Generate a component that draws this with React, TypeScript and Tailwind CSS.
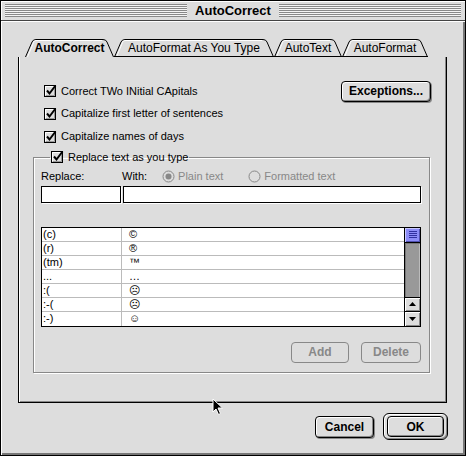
import React from "react";

function CheckBox() {
  return (
    <svg width="15" height="14" viewBox="0 0 15 14" className="shrink-0">
      <rect x="0.5" y="1.5" width="11" height="11" fill="#dddddd" stroke="#000" />
      <path d="M1.5 11 V2.5 H10.5" stroke="#fff" fill="none" />
      <path d="M2 11.5 H10.5 V3" stroke="#999" fill="none" />
      <path d="M3 6.5 L5.5 9.5 L11.5 1.5" stroke="#000" strokeWidth="2" fill="none" />
    </svg>
  );
}

function Radio({ on }: { on?: boolean }) {
  return (
    <svg width="13" height="13" viewBox="0 0 13 13" className="shrink-0">
      <circle cx="6.5" cy="6.5" r="5.5" fill="#dddddd" stroke="#888" />
      {on && <circle cx="6.5" cy="6.5" r="3" fill="#888" />}
    </svg>
  );
}

function Tab({ label, active, w }: { label: string; active?: boolean; w: number }) {
  const s = 7;
  return (
    <div className="relative h-[18px] flex items-center justify-center shrink-0" style={{ width: w }}>
      <svg className="absolute inset-0" width={w} height="18" viewBox={`0 0 ${w} 18`}>
        <path
          d={`M0.5 18 L${s} 3 Q${s + 1} 0.5 ${s + 4} 0.5 L${w - s - 4} 0.5 Q${w - s - 1} 0.5 ${w - s} 3 L${w - 0.5} 18`}
          fill="#dddddd"
          stroke="#000"
        />
        <path d={`M2.5 18 L${s + 1.5} 3.5 Q${s + 2} 1.5 ${s + 4} 1.5 L${w - s - 5} 1.5`} stroke="#fff" fill="none" />
        {!active && <path d={`M0 17.5 H${w}`} stroke="#000" />}
      </svg>
      <span className={`relative text-[12px] leading-none ${active ? "font-bold" : ""}`}>{label}</span>
    </div>
  );
}

const rows: [string, string][] = [
  ["(c)", "©"],
  ["(r)", "®"],
  ["(tm)", "™"],
  ["...", "…"],
  [":(", "☹"],
  [":-(", "☹"],
  [":-)", "☺"],
];

export default function App() {
  return (
    <div className="relative w-[466px] h-[456px] bg-[#dddddd] border border-black flex flex-col text-black font-['Liberation_Sans',Arial,sans-serif] select-none">
      {/* title bar */}
      <div className="h-[20px] flex items-center px-[4px] border-b border-[#444] shadow-[inset_1px_1px_0_#fff]">
        <div className="flex-1 h-[13px] bg-[repeating-linear-gradient(to_bottom,#888_0_1px,#f4f4f4_1px_2px)]" />
        <div className="px-[8px] text-[13px] font-bold leading-none">AutoCorrect</div>
        <div className="flex-1 h-[13px] bg-[repeating-linear-gradient(to_bottom,#888_0_1px,#f4f4f4_1px_2px)]" />
      </div>

      <div className="flex-1 flex flex-col pl-[17px] shadow-[inset_1px_1px_0_#fff,inset_-2px_-2px_0_#777]">
        {/* tabs */}
        <div className="mt-[18px] ml-[7px] flex">
          <Tab label="AutoCorrect" active w={89} />
          <Tab label="AutoFormat As You Type" w={160} />
          <Tab label="AutoText" w={68} />
          <Tab label="AutoFormat" w={86} />
        </div>

        {/* panel */}
        <div className="w-[429px] h-[346px] border border-black border-t-0 shadow-[inset_1px_0_0_#fff,inset_-1px_-1px_0_#888] flex flex-col">
          <div className="flex flex-col pl-[25px] pr-[15px] pt-[23px] text-[11px]">
            <div className="h-[22px] flex items-center">
              <CheckBox />
              <span className="ml-[2px]">Correct TWo INitial CApitals</span>
              <button className="ml-auto w-[90px] h-[21px] rounded-[4px] border border-black bg-[#dddddd] shadow-[inset_1px_1px_0_#fff,inset_-1px_-1px_0_#888,1px_1px_0_#888] text-[12px] font-bold">
                Exceptions...
              </button>
            </div>
            <div className="h-[23px] flex items-center">
              <CheckBox />
              <span className="ml-[2px]">Capitalize first letter of sentences</span>
            </div>
            <div className="h-[23px] flex items-center">
              <CheckBox />
              <span className="ml-[2px]">Capitalize names of days</span>
            </div>
          </div>

          <fieldset className="ml-[14px] mt-[1px] w-[397px] border border-[#888] shadow-[1px_1px_0_#fff,inset_1px_1px_0_#fff] pl-[7px] pr-[8px] pb-[9px] text-[11px]">
            <legend className="ml-[9px] px-[1px] flex items-center">
              <CheckBox />
              <span className="ml-[2px]">Replace text as you type</span>
            </legend>
            <div className="mt-[4px] h-[14px] flex items-center">
              <span className="w-[81px]">Replace:</span>
              <span>With:</span>
              <span className="ml-[15px] flex items-center text-[#888]">
                <Radio on />
                <span className="ml-[3px]">Plain text</span>
              </span>
              <span className="ml-[25px] flex items-center text-[#888]">
                <Radio />
                <span className="ml-[3px]">Formatted text</span>
              </span>
            </div>
            <div className="mt-[2px] flex">
              <div className="w-[80px] h-[17px] bg-white border border-black shadow-[1px_1px_0_#fff]" />
              <div className="ml-[2px] w-[298px] h-[17px] bg-white border border-black shadow-[1px_1px_0_#fff]" />
            </div>

            <div className="mt-[24px] w-[380px] h-[100px] border border-black bg-white flex">
              <div className="flex-1 flex flex-col">
                {rows.map(([a, b], i) => (
                  <div key={i} className={`h-[14px] flex text-[11px] leading-[13px] ${i < rows.length - 1 ? "border-b border-[#bbb]" : ""}`}>
                    <div className="w-[80px] pl-[1px] border-r border-[#bbb]">{a}</div>
                    <div className="pl-[7px]">{b}</div>
                  </div>
                ))}
              </div>
              <div className="w-[16px] border-l border-black flex flex-col bg-[#999]">
                <div className="h-[15px] bg-[#8c8cf7] border-b border-black shadow-[inset_1px_1px_0_#c8c8ff,inset_-1px_-1px_0_#5050b0] flex flex-col items-center justify-center gap-[1px]">
                  <div className="w-[8px] h-px bg-[#3030a0]" />
                  <div className="w-[8px] h-px bg-[#3030a0]" />
                  <div className="w-[8px] h-px bg-[#3030a0]" />
                  <div className="w-[8px] h-px bg-[#3030a0]" />
                </div>
                <div className="flex-1 shadow-[inset_1px_1px_0_#777,inset_-1px_0_0_#bbb]" />
                <div className="h-[14px] border-t border-black bg-[#dddddd] shadow-[inset_1px_1px_0_#fff,inset_-1px_-1px_0_#888] flex items-center justify-center">
                  <svg width="7" height="4" viewBox="0 0 7 4"><path d="M3.5 0 L7 4 H0 Z" fill="#000" /></svg>
                </div>
                <div className="h-[15px] border-t border-black bg-[#dddddd] shadow-[inset_1px_1px_0_#fff,inset_-1px_-1px_0_#888] flex items-center justify-center">
                  <svg width="7" height="4" viewBox="0 0 7 4"><path d="M0 0 H7 L3.5 4 Z" fill="#000" /></svg>
                </div>
              </div>
            </div>

            <div className="mt-[15px] flex justify-end gap-[12px]">
              <button className="w-[58px] h-[21px] rounded-[4px] border border-[#888] text-[#888] text-[12px] font-bold">Add</button>
              <button className="w-[60px] h-[21px] rounded-[4px] border border-[#888] text-[#888] text-[12px] font-bold">Delete</button>
            </div>
          </fieldset>
        </div>

        {/* bottom buttons */}
        <div className="mt-[10px] mr-[17px] flex justify-end items-center gap-[9px]">
          <button className="w-[59px] h-[22px] rounded-[4px] border border-black bg-[#dddddd] shadow-[inset_1px_1px_0_#fff,inset_-1px_-1px_0_#888,1px_1px_0_#888] text-[12px] font-bold">
            Cancel
          </button>
          <div className="w-[65px] h-[27px] rounded-[6px] border border-black bg-[#dddddd] shadow-[inset_1px_1px_0_#fff,inset_-1px_-1px_0_#888] flex items-center justify-center">
            <button className="w-[57px] h-[21px] rounded-[4px] border border-black bg-[#dddddd] shadow-[inset_1px_1px_0_#fff,inset_-1px_-1px_0_#888] text-[12px] font-bold">
              OK
            </button>
          </div>
        </div>
      </div>

      {/* mouse pointer */}
      <svg className="absolute left-[211px] top-[397px]" width="12" height="18" viewBox="0 0 12 18">
        <path d="M1 1 L1 14 L4 11 L6.5 16.5 L8.5 15.5 L6 10 L10.5 10 Z" fill="#000" stroke="#fff" strokeWidth="1" />
      </svg>
    </div>
  );
}
